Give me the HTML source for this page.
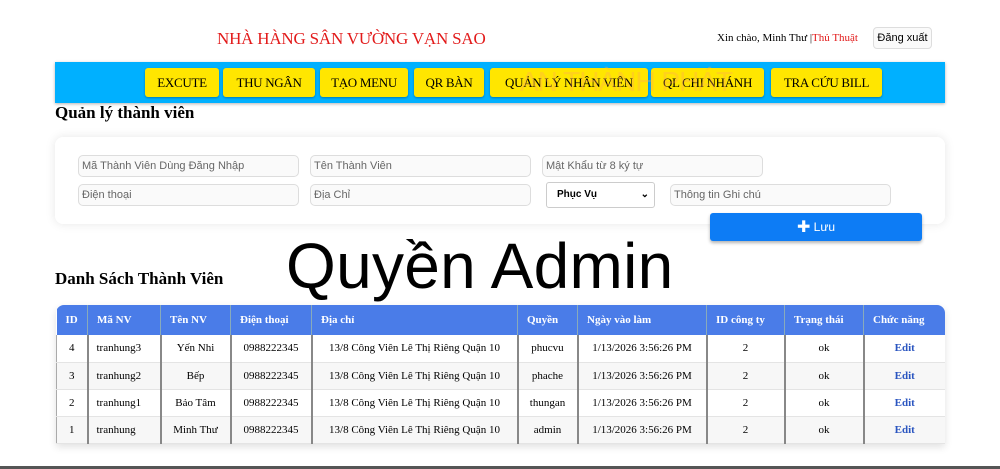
<!DOCTYPE html>
<html><head><meta charset="utf-8"><style>
*{margin:0;padding:0;box-sizing:border-box}
body{width:1000px;height:469px;background:#fff;position:relative;overflow:hidden;font-family:"Liberation Serif",serif}
.a{position:absolute}
.title{left:217px;top:29px;color:#e21b1b;font-size:17px;letter-spacing:-0.2px}
.hello{left:717px;top:32px;font-size:11px;color:#000}
.hello span{color:#e21b1b}
.logout{left:873px;top:27px;width:59px;height:22px;border:1px solid #ddd;border-radius:4px;font-family:"Liberation Sans",sans-serif;font-size:11px;text-align:center;line-height:20px;background:#fafafa}
.nav{left:55px;top:62px;width:890px;height:41px;background:#00b0ff;box-shadow:0 1px 3px rgba(0,0,0,.3)}
.btn{position:absolute;top:6px;height:29px;background:#ffe600;border-radius:3px;font-size:13px;line-height:29px;text-align:center;box-shadow:0 1px 2px rgba(0,0,0,.3);letter-spacing:-0.3px}
.wm{left:520px;top:66px;font-family:"Liberation Sans",sans-serif;font-size:28px;color:rgba(255,170,80,.35);letter-spacing:-1px}
h2{position:absolute;font-size:17px;font-weight:bold}
.card{left:55px;top:137px;width:890px;height:87px;background:#fff;border-radius:8px;box-shadow:0 0 10px rgba(0,0,0,.1)}
.in{position:absolute;height:22px;border:1px solid #ddd;border-radius:5px;background:#fafafa;font-family:"Liberation Sans",sans-serif;font-size:11px;color:#666;padding-left:3px;line-height:20px}
.sel{left:546px;top:182px;width:109px;height:26px;border:1px solid #ccc;border-radius:3px;font-family:"Liberation Sans",sans-serif;font-size:10px;font-weight:bold;line-height:24px;padding-left:10px;background:#fff}
.save{left:710px;top:213px;width:212px;height:28px;background:#0d7cf5;border-radius:3px;color:#fff;font-family:"Liberation Sans",sans-serif;font-size:12px;text-align:center;line-height:28px;box-shadow:0 2px 3px rgba(0,0,0,.3)}
.big{left:286px;top:226px;font-family:"Liberation Sans",sans-serif;font-size:64px;color:#000;line-height:80px;letter-spacing:0.3px}
table{position:absolute;left:56px;top:305px;width:889px;border-collapse:collapse;font-size:11px;box-shadow:0 3px 8px rgba(0,0,0,.12);border-radius:8px 8px 0 0;overflow:hidden}
th{background:#4a7ce8;color:#fff;height:30px;font-weight:bold;text-align:left;padding-left:9px;border-right:1px solid #8ab}
td{height:27px;text-align:center;border-left:2px solid #888;border-bottom:1px solid #e4e4e4;background:#fff}
td:first-child{border-left:1px solid #aaa}
tr:nth-child(odd) td{background:#f7f7f7}
td.l{text-align:left;padding-left:8px}
td.e{color:#2a55c0;font-weight:bold}
.bar{left:0;top:466px;width:1000px;height:3px;background:#555}
</style></head><body>
<div class="a title">NHÀ HÀNG SÂN VƯỜNG VẠN SAO</div>
<div class="a hello">Xin chào, Minh Thư |<span>Thủ Thuật</span></div>
<div class="a logout">Đăng xuất</div>
<div class="a nav">
<div class="btn" style="left:90px;width:74px">EXCUTE</div>
<div class="btn" style="left:168px;width:92px">THU NGÂN</div>
<div class="btn" style="left:265px;width:88px">TẠO MENU</div>
<div class="btn" style="left:359px;width:70px">QR BÀN</div>
<div class="btn" style="left:435px;width:158px">QUẢN LÝ NHÂN VIÊN</div>
<div class="btn" style="left:596px;width:113px">QL CHI NHÁNH</div>
<div class="btn" style="left:716px;width:111px">TRA CỨU BILL</div>
</div>
<div class="a wm">AN THÀNH PHÁT</div>
<h2 style="left:55px;top:103px">Quản lý thành viên</h2>
<div class="a card"></div>
<div class="in" style="left:78px;top:155px;width:221px">Mã Thành Viên Dùng Đăng Nhập</div>
<div class="in" style="left:310px;top:155px;width:221px">Tên Thành Viên</div>
<div class="in" style="left:542px;top:155px;width:221px">Mật Khẩu từ 8 ký tự</div>
<div class="in" style="left:78px;top:184px;width:221px">Điện thoại</div>
<div class="in" style="left:310px;top:184px;width:221px">Địa Chỉ</div>
<div class="a sel">Phục Vụ<span style="position:absolute;right:5px;top:0">&#8964;</span></div>
<div class="in" style="left:670px;top:184px;width:221px">Thông tin Ghi chú</div>
<div class="a save"><span style="font-size:16px;vertical-align:-1px">✚</span> Lưu</div>
<div class="a big">Quyền Admin</div>
<h2 style="left:55px;top:269px">Danh Sách Thành Viên</h2>
<table>
<tr><th style="width:31px">ID</th><th style="width:73px">Mã NV</th><th style="width:70px">Tên NV</th><th style="width:81px">Điện thoại</th><th style="width:206px">Địa chỉ</th><th style="width:60px">Quyền</th><th style="width:129px">Ngày vào làm</th><th style="width:78px">ID công ty</th><th style="width:79px">Trạng thái</th><th style="border-right:0">Chức năng</th></tr>
<tr><td>4</td><td class="l">tranhung3</td><td>Yến Nhi</td><td>0988222345</td><td>13/8 Công Viên Lê Thị Riêng Quận 10</td><td>phucvu</td><td>1/13/2026 3:56:26 PM</td><td>2</td><td>ok</td><td class="e">Edit</td></tr>
<tr><td>3</td><td class="l">tranhung2</td><td>Bếp</td><td>0988222345</td><td>13/8 Công Viên Lê Thị Riêng Quận 10</td><td>phache</td><td>1/13/2026 3:56:26 PM</td><td>2</td><td>ok</td><td class="e">Edit</td></tr>
<tr><td>2</td><td class="l">tranhung1</td><td>Bảo Tâm</td><td>0988222345</td><td>13/8 Công Viên Lê Thị Riêng Quận 10</td><td>thungan</td><td>1/13/2026 3:56:26 PM</td><td>2</td><td>ok</td><td class="e">Edit</td></tr>
<tr><td>1</td><td class="l">tranhung</td><td>Minh Thư</td><td>0988222345</td><td>13/8 Công Viên Lê Thị Riêng Quận 10</td><td>admin</td><td>1/13/2026 3:56:26 PM</td><td>2</td><td>ok</td><td class="e">Edit</td></tr>
</table>
<div class="a bar"></div>
</body></html>
